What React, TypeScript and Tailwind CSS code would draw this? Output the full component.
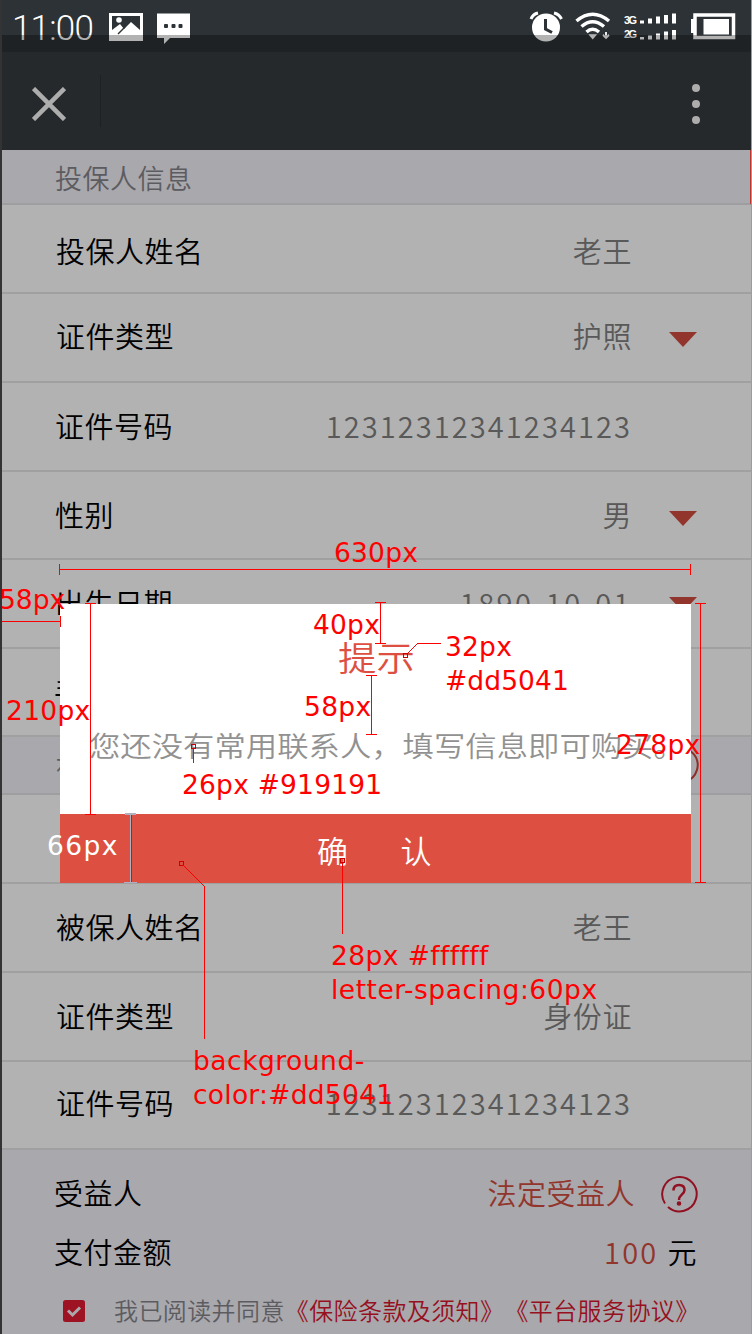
import React from 'react';

const cjk = "font-['Noto_Sans_CJK_SC',sans-serif]";

function Caret() {
  return (
    <svg width="28" height="15" viewBox="0 0 28 15"><path d="M0 0H28L14 15Z" fill="#d14d40" /></svg>
  );
}

function Help({ color }: { color: string }) {
  return (
    <svg width="38" height="38" viewBox="0 0 38 38" fill="none" stroke={color} strokeWidth="2">
      <path d="M5 28.5A17.2 17.2 0 1 1 8 32" />
      <path d="M13.5 15.5C13.5 11.6 15.8 10 19 10s5.500 1.800 5.500 5c0 4.600-5.500 4.300-5.500 10" strokeWidth="2.500" />
      <circle cx="19" cy="28.500" r="1.300" fill={color} />
    </svg>
  );
}

function Row({ label, value, caret, pad, nudge, h, spacing = 'tracking-[0.6px]', caretPad = 'pt-[17px]' }: {
  label: string; value: string; caret?: boolean; pad: string; nudge: string; h: string; spacing?: string; caretPad?: string;
}) {
  return (
    <div className={`flex items-start justify-between border-b-2 border-[#e6e6e6] bg-white pr-[53px] ${h} ${pad} ${nudge}`}>
      <span className="text-[29px] leading-[40px] tracking-[0.5px] text-black">{label}</span>
      <div className="flex items-start">
        <span className={`text-[29px] leading-[40px] text-[#808080] ${spacing}`}>{value}</span>
        <span className={`ml-[37px] flex w-[29px] ${caretPad}`}>{caret && <Caret />}</span>
      </div>
    </div>
  );
}

function StatusBar() {
  return (
    <div className="flex h-[52px] items-start bg-[#2c3235] text-white">
      <span className="w-[96px] pl-[10px] pt-[10px] font-[Roboto,sans-serif] text-[35px] font-light leading-[38px] tracking-[-0.8px]">11:00</span>
      <svg className="ml-[10px] mt-[12px]" width="36" height="30" viewBox="0 0 36 30">
        <path fillRule="evenodd" d="M1 1H35V29H1ZM4 4V18L12 12L16 17L23 10L32 18V4Z" fill="#fff" />
        <circle cx="11" cy="8" r="2.800" fill="#fff" />
        <path d="M10 22L17 15" stroke="#2c3235" strokeWidth="1.500" />
      </svg>
      <svg className="ml-[12px] mt-[12px]" width="35" height="33" viewBox="0 0 35 33">
        <path d="M1 1.500H34V26H14L8 32V26H1Z" fill="#fff" />
        <g fill="#2c3235"><rect x="8" y="12" width="4" height="4" rx="1" /><rect x="15.500" y="12" width="4" height="4" rx="1" /><rect x="22.500" y="12" width="4" height="4" rx="1" /></g>
      </svg>
      <div className="flex-1" />
      <svg className="mt-[10px]" width="36" height="34" viewBox="0 0 36 34">
        <circle cx="18" cy="17.500" r="14" fill="#fff" />
        <path d="M17.500 9V19L24 22.500" stroke="#2c3235" strokeWidth="3" fill="none" />
        <path d="M3 9Q5 4 10 3M26 3Q31 4 33.500 9" stroke="#fff" strokeWidth="3" fill="none" />
      </svg>
      <svg className="ml-[11px] mt-[12px]" width="36" height="30" viewBox="0 0 36 30" fill="none" stroke="#fff" strokeWidth="3.500">
        <path d="M1.500 9Q17.500-4.500 34 9M6.500 14.500Q17.500 5 29 14.500M11.500 20Q17.500 14.500 24 20" />
        <path d="M13.500 22.500H22L17.700 27.500Z" fill="#fff" stroke="none" />
        <path d="M31 20V25M28 23L31 26L34 23" strokeWidth="1.800" />
      </svg>
      <div className="ml-[13px] mt-[13px] flex w-[13px] flex-col font-['Liberation_Sans',sans-serif] text-[11px] font-bold leading-[14px] tracking-[-1.500px]">
        <span>3G</span><span>2G</span>
      </div>
      <svg className="ml-[3px] mt-[13px]" width="38" height="28" viewBox="0 0 38 28" fill="#fff">
        <path d="M0 7.500h4v3h-4zM8 5.500h4v5h-4zM16 3.500h4v7h-4zM24 2h4v8.500h-4zM32 .5h4v10h-4zM0 24h4v2.500h-4zM8 22.500h4v4h-4zM16 20.500h4v6h-4zM24 18.500h4v8h-4zM32 17h4v9.500h-4z" />
      </svg>
      <svg className="ml-[12px] mr-[15px] mt-[12px]" width="46" height="28" viewBox="0 0 46 28">
        <path d="M5 3H43.500V25.500H5Z" stroke="#fff" strokeWidth="3.500" fill="none" />
        <rect x="1" y="7" width="4" height="14" fill="#fff" />
        <rect x="13.500" y="7" width="25.500" height="15.500" fill="#fff" />
      </svg>
    </div>
  );
}

function Note({ className, children }: { className: string; children: React.ReactNode }) {
  return (
    <div className={`absolute whitespace-nowrap font-['DejaVu_Sans',sans-serif] text-[26.500px] font-normal leading-[34px] [font-variant-ligatures:none] ${className}`}>{children}</div>
  );
}

function Annotations() {
  return (
    <div className="absolute inset-0 overflow-hidden">
      <svg className="absolute inset-0" width="752" height="1334" fill="none" stroke="#ff0000" shapeRendering="crispEdges">
        <path d="M59.500 564V575M59.500 569.500H690.500M690.500 564V575" />
        <path d="M1.500 616V627M1.500 621.500H60.500M60.500 616V627" />
        <path d="M85 603.500H96M90.500 603.500V814.500M85 814.500H96" />
        <path d="M375 602.500H386M380.500 602.500V643.500M375 643.500H386" />
        <path d="M366 675.500H377M371.500 675.500V734.500M366 734.500H377" />
        <path d="M695 603.500H706M700.500 603.500V882.500M695 882.500H706" />
        <path d="M131.500 815V882" />
        <path d="M125 814H136M130.500 814V882M124 882.500H137" stroke="#b0b0c0" strokeWidth="1.500" />
        <path d="M403.500 653.500h4v4h-4zM191.500 744.500h4v4h-4zM179.500 861.500h4v4h-4zM340.500 858.500h4v4h-4z" stroke="#cc0000" />
        <path d="M407.500 653.500L417.500 643.500H441M193.500 749V763M183.500 865.500L204.500 886.500V1039M342.500 863V934" />
      </svg>
      <Note className="left-[334px] top-[536px] tracking-[0.2px] text-[#ff0000]">630px</Note>
      <Note className="left-[-1px] top-[583px] text-[#ff0000]">58px</Note>
      <Note className="left-[313px] top-[608px] tracking-[0.2px] text-[#ff0000]">40px</Note>
      <Note className="left-[445px] top-[630px] tracking-[0.2px] text-[#ff0000]">32px<br /><span className="tracking-[0.1px]">#dd5041</span></Note>
      <Note className="left-[304px] top-[690px] tracking-[0.3px] text-[#ff0000]">58px</Note>
      <Note className="left-[6px] top-[694px] tracking-[0.3px] text-[#ff0000]">210px</Note>
      <Note className="left-[616px] top-[728px] tracking-[0.3px] text-[#ff0000]">278px</Note>
      <Note className="left-[182px] top-[768px] tracking-[0.2px] text-[#ff0000]">26px #919191</Note>
      <Note className="left-[47px] top-[829px] tracking-[1.400px] text-white">66px</Note>
      <Note className="left-[331px] top-[939px] text-[#ff0000]"><span className="tracking-[0.400px]">28px #ffffff</span><br /><span className="tracking-[0.500px]">letter-spacing:60px</span></Note>
      <Note className="left-[193px] top-[1044px] text-[#ff0000]"><span className="tracking-[0.500px]">background-</span><br /><span className="tracking-[0.250px]">color:#dd5041</span></Note>
    </div>
  );
}

export default function App() {
  return (
    <div className={`relative h-[1334px] w-[752px] overflow-hidden border-l-2 border-r border-l-[#333333] border-r-[#9c9c9c] bg-[#f3f1f8] font-[350] ${cjk}`}>
      <StatusBar />
      <header className="flex h-[98px] items-center justify-between bg-[#353b3f]">
        <div className="flex items-center">
          <svg className="ml-[30px] mt-[5px]" width="34" height="34" viewBox="0 0 34 34" stroke="#f8f8f8" strokeWidth="4.500"><path d="M1.500 1.500L32.500 32.500M32.500 1.500L1.500 32.500" /></svg>
          <span className="ml-[34px] h-[52px] w-px bg-[#2b3033]" />
        </div>
        <svg className="mr-[50px] mt-[5px]" width="10" height="42" viewBox="0 0 10 42" fill="#f8f8f8"><circle cx="5" cy="5" r="4" /><circle cx="5" cy="21" r="4" /><circle cx="5" cy="37" r="4" /></svg>
      </header>
      <div className="flex h-[55px] items-start border-b-2 border-[#e3e2e6] pl-[53px] pt-[8px] text-[27px] leading-[40px] tracking-[0.5px] text-[#85858a]">
        <span>投保人信息</span>
      </div>
      <Row label="投保人姓名" value="老王" h="h-[89px]" pad="pl-[54px]" nudge="pt-[25px]" />
      <Row label="证件类型" value="护照" caret h="h-[89px]" pad="pl-[54px]" nudge="pt-[21px]" />
      <Row label="证件号码" value="12312312341234123" spacing="tracking-[2.100px]" h="h-[89px]" pad="pl-[53px]" nudge="pt-[22px]" />
      <Row label="性别" value="男" caret h="h-[88px]" pad="pl-[53px]" nudge="pt-[22px]" />
      <Row label="出生日期" value="1890-10-01" spacing="tracking-[2.500px]" caretPad="pt-[15px]" caret h="h-[89px]" pad="pl-[53px]" nudge="pt-[22px]" />
      <Row label="手机号码" value="" h="h-[88px]" pad="pl-[52px]" nudge="pt-[22px]" />
      <div className="flex h-[58px] items-start justify-between border-b-2 border-[#e3e2e6] pl-[54px] pr-[52px] pt-[9px] text-[27px] leading-[40px] text-[#85858a]">
        <span>被保人信息</span>
        <Help color="#cc4438" />
      </div>
      <Row label="" value="" h="h-[89px]" pad="pl-[54px]" nudge="pt-[22px]" />
      <Row label="被保人姓名" value="老王" h="h-[89px]" pad="pl-[54px]" nudge="pt-[22px]" />
      <Row label="证件类型" value="身份证" h="h-[89px]" pad="pl-[54px]" nudge="pt-[22px]" />
      <Row label="证件号码" value="12312312341234123" spacing="tracking-[2.100px]" h="h-[88px]" pad="pl-[54px]" nudge="pt-[20px]" />
      <div className="flex h-[74px] items-start justify-between pl-[52px] pr-[53px] pt-[22px] text-[29px] leading-[40px] tracking-[0.5px] text-black">
        <span>受益人</span>
        <div className="flex text-[#d14d40]"><span className="mr-[25px]">法定受益人</span><span className="pt-[3px]"><Help color="#d01830" /></span></div>
      </div>
      <div className="flex h-[60px] items-start justify-between pl-[52px] pr-[54px] pt-[7px] text-[29px] leading-[40px] tracking-[0.5px] text-black">
        <span>支付金额</span>
        <div className="flex gap-[9px]"><span className="tracking-[2.200px] text-[#d14d40]">100</span><span>元</span></div>
      </div>
      <div className="flex items-start whitespace-nowrap pl-[61px] pt-[8px] text-[24px] leading-[36px] tracking-[0.400px] text-[#85858a] [text-spacing-trim:space-all]">
        <svg className="mt-[8px]" width="22" height="22" viewBox="0 0 22 22"><rect width="22" height="22" rx="2.500" fill="#e21c33" /><path d="M5 10.500L9.500 15L17 7.500" stroke="#f3f1f8" strokeWidth="3" fill="none" /></svg>
        <span className="ml-[29px]">我已阅读并同意</span><span className="text-[#d8182f]">《保险条款及须知》《平台服务协议》</span>
      </div>

      <div className="absolute inset-x-0 bottom-0 top-[35px] bg-black/30" />
      <div className="absolute right-0 top-[150px] h-[54px] w-px bg-[#b03a34]" />

      <div className="absolute left-[58px] top-[604px] flex h-[279px] w-[631px] flex-col bg-white">
        <div className="flex h-[210px] flex-col items-start">
          <h2 className="ml-[278px] mt-[29px] origin-left scale-x-[1.13] text-[34px] font-[350] leading-[48px] text-[#dd5041]">提示</h2>
          <p className="ml-[29px] mt-[42px] origin-left scale-x-[1.12] whitespace-nowrap text-[28px] leading-[44px] text-[#919191]">您还没有常用联系人，填写信息即可购买。</p>
        </div>
        <button className="flex h-[69px] items-center bg-[#dd5041] pb-[0px] pl-[257px] pt-[3px] text-left text-[31px] tracking-[52.500px] text-white">确认</button>
      </div>
      <div className="absolute -left-[2px] top-0 h-[1334px] w-[752px]"><Annotations /></div>
    </div>
  );
}
